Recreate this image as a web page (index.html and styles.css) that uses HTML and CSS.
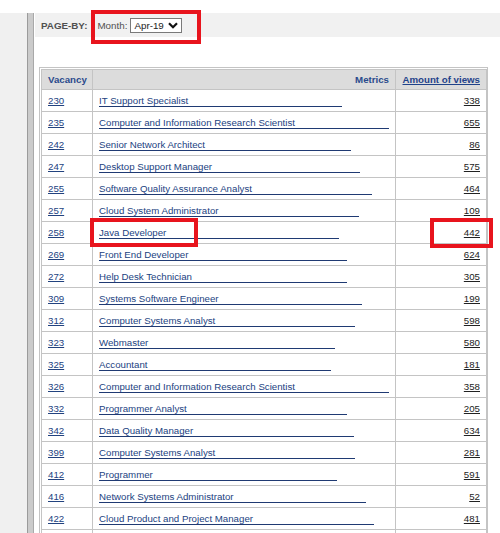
FILE: index.html
```html
<!DOCTYPE html>
<html>
<head>
<meta charset="utf-8">
<link rel="stylesheet" href="styles.css">
</head>
<body>
<div class="page">
  <div class="sidebar"></div>
  <div class="splitter"></div>
  <div class="main">
    <div class="pageby">
      <span class="pb-label">PAGE-BY:</span>
      <span class="pb-field">Month:</span>
      <span class="select"><span class="select-text">Apr-19</span><svg class="chev" width="10" height="7" viewBox="0 0 10 7"><path d="M1 1.2 L5 5.2 L9 1.2" fill="none" stroke="#111" stroke-width="2.2"/></svg></span>
    </div>
    <div class="grid-wrap">
      <table class="grid">
        <colgroup><col class="c1"><col class="c2"><col class="c3"></colgroup>
        <thead>
          <tr><th class="h-left">Vacancy</th><th class="h-right">Metrics</th><th class="h-right"><a class="hlink">Amount of views</a></th></tr>
        </thead>
        <tbody>
          <tr><td><a class="num">230</a></td><td><a class="metric" style="width:243px">IT Support Specialist</a></td><td class="val"><a>338</a></td></tr>
          <tr><td><a class="num">235</a></td><td><a class="metric" style="width:290px">Computer and Information Research Scientist</a></td><td class="val"><a>655</a></td></tr>
          <tr><td><a class="num">242</a></td><td><a class="metric" style="width:252px">Senior Network Architect</a></td><td class="val"><a>86</a></td></tr>
          <tr><td><a class="num">247</a></td><td><a class="metric" style="width:261px">Desktop Support Manager</a></td><td class="val"><a>575</a></td></tr>
          <tr><td><a class="num">255</a></td><td><a class="metric" style="width:273px">Software Quality Assurance Analyst</a></td><td class="val"><a>464</a></td></tr>
          <tr><td><a class="num">257</a></td><td><a class="metric" style="width:260px">Cloud System Administrator</a></td><td class="val"><a>109</a></td></tr>
          <tr><td><a class="num">258</a></td><td><a class="metric" style="width:240px">Java Developer</a></td><td class="val"><a>442</a></td></tr>
          <tr><td><a class="num">269</a></td><td><a class="metric" style="width:248px">Front End Developer</a></td><td class="val"><a>624</a></td></tr>
          <tr><td><a class="num">272</a></td><td><a class="metric" style="width:248px">Help Desk Technician</a></td><td class="val"><a>305</a></td></tr>
          <tr><td><a class="num">309</a></td><td><a class="metric" style="width:263px">Systems Software Engineer</a></td><td class="val"><a>199</a></td></tr>
          <tr><td><a class="num">312</a></td><td><a class="metric" style="width:256px">Computer Systems Analyst</a></td><td class="val"><a>598</a></td></tr>
          <tr><td><a class="num">323</a></td><td><a class="metric" style="width:236px">Webmaster</a></td><td class="val"><a>580</a></td></tr>
          <tr><td><a class="num">325</a></td><td><a class="metric" style="width:232px">Accountant</a></td><td class="val"><a>181</a></td></tr>
          <tr><td><a class="num">326</a></td><td><a class="metric" style="width:290px">Computer and Information Research Scientist</a></td><td class="val"><a>358</a></td></tr>
          <tr><td><a class="num">332</a></td><td><a class="metric" style="width:248px">Programmer Analyst</a></td><td class="val"><a>205</a></td></tr>
          <tr><td><a class="num">342</a></td><td><a class="metric" style="width:255px">Data Quality Manager</a></td><td class="val"><a>634</a></td></tr>
          <tr><td><a class="num">399</a></td><td><a class="metric" style="width:256px">Computer Systems Analyst</a></td><td class="val"><a>281</a></td></tr>
          <tr><td><a class="num">412</a></td><td><a class="metric" style="width:238px">Programmer</a></td><td class="val"><a>591</a></td></tr>
          <tr><td><a class="num">416</a></td><td><a class="metric" style="width:267px">Network Systems Administrator</a></td><td class="val"><a>52</a></td></tr>
          <tr><td><a class="num">422</a></td><td><a class="metric" style="width:275px">Cloud Product and Project Manager</a></td><td class="val"><a>481</a></td></tr>
          <tr><td></td><td></td><td class="val"></td></tr>
        </tbody>
      </table>
    </div>
  </div>
</div>
<div class="mark mark-month"></div>
<div class="mark mark-java"></div>
<div class="mark mark-views"></div>
</body>
</html>
```

FILE: styles.css
```css
html, body {
  margin: 0;
  padding: 0;
  background: #ffffff;
  height: 533px;
  overflow: hidden;
  font-family: "Liberation Sans", Arial, sans-serif;
}

.page {
  display: flex;
  padding-top: 13px;
  height: 520px;
}

.sidebar {
  width: 27px;
  background: #f0f0f0;
}

.splitter {
  width: 5px;
  background: #cbcbcb;
  border-left: 1px solid #9b9b9b;
  border-right: 1px solid #a9a9a9;
}

.main {
  flex: 1;
  padding-left: 1px;
}

.pageby {
  height: 24px;
  background: #f1f1f1;
  display: flex;
  align-items: center;
  padding-left: 6px;
  color: #505050;
  font-size: 10px;
}

.pb-label {
  font-weight: bold;
  font-size: 9.8px;
  margin-right: 10px;
}

.pb-field {
  margin-right: 3px;
  font-size: 9.8px;
}

.select {
  height: 13px;
  border: 1px solid #7a7a7a;
  background: #ffffff;
  display: flex;
  align-items: center;
  justify-content: space-between;
  padding: 0 3px 0 3px;
  box-sizing: content-box;
  width: 44px;
  color: #222;
  font-size: 9.8px;
}

.chev {
  display: block;
}

.grid-wrap {
  margin-top: 30px;
  margin-left: 4px;
  border: 1px solid #c4c4c4;
  padding: 1px;
  width: 445px;
}

.grid {
  border-collapse: collapse;
  table-layout: fixed;
  width: 445px;
  font-size: 9.7px;
}

.c1 { width: 51px; }
.c2 { width: 303px; }
.c3 { width: 91px; }

.grid th, .grid td {
  border: 1px solid #c4c4c4;
  padding: 0 6px;
  line-height: 11px;
  white-space: nowrap;
  overflow: hidden;
}

.grid th {
  height: 19px;
  background: #dcdcdc;
  color: #2a4a8c;
  font-weight: bold;
}

.h-left { text-align: left; }
.h-right { text-align: right; }

.hlink {
  text-decoration: underline;
  color: #1f428a;
}

.grid td {
  height: 21px;
}

.num {
  color: #22427f;
  text-decoration: underline;
}

.metric {
  display: inline-block;
  color: #22427f;
  line-height: 10px;
  border-bottom: 1px solid #1f3a73;
}

.val {
  text-align: right;
}

.val a {
  color: #222222;
  text-decoration: underline;
}

.mark {
  position: absolute;
  border: 4px solid #e8141d;
  box-sizing: border-box;
}

.mark-month {
  left: 91px;
  top: 10px;
  width: 110px;
  height: 34px;
}

.mark-java {
  left: 90px;
  top: 218px;
  width: 108px;
  height: 29px;
}

.mark-views {
  left: 430px;
  top: 218px;
  width: 63px;
  height: 30px;
}
```
